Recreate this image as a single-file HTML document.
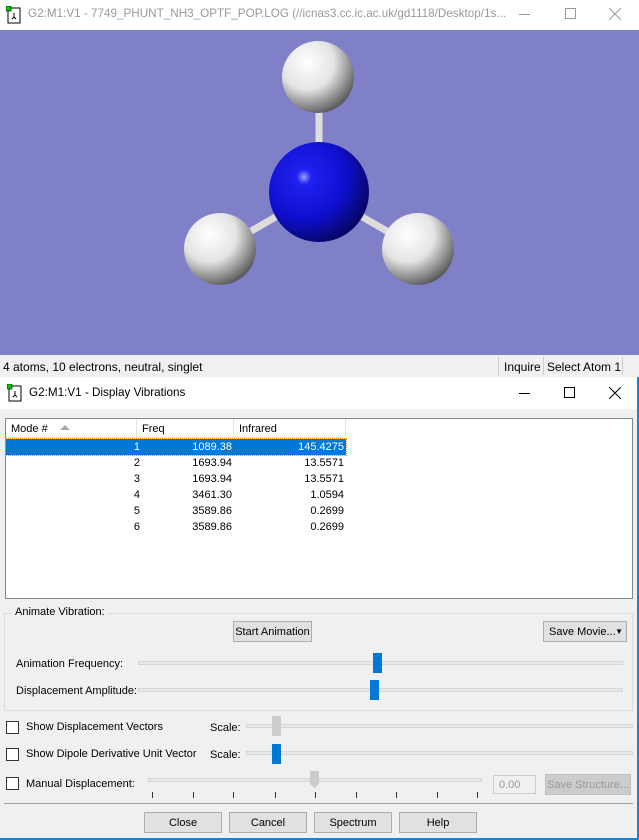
<!DOCTYPE html>
<html><head><style>
*{margin:0;padding:0;box-sizing:border-box}
body{width:639px;height:840px;overflow:hidden;background:#f0f0f0;font-family:"Liberation Sans",Arial,sans-serif;font-size:11px;color:#000;position:relative}
.a{position:absolute}
.t{white-space:nowrap}
.btn{position:absolute;background:#e1e1e1;border:1px solid #adadad;text-align:center;line-height:20px;font-size:11px;white-space:nowrap;overflow:hidden}
.track{position:absolute;height:4px;background:#e7e7e7;border:1px solid #d6d6d6}
.thumb{position:absolute;width:9px;height:20px;background:#0078d7}
.cb{position:absolute;width:13px;height:13px;border:1px solid #333;background:#fff}
.row{position:absolute;left:6px;width:340px;height:16px;line-height:16px}
.row span{position:absolute;text-align:right}
</style></head><body>
<div class="a" style="left:0;top:0;width:639px;height:30px;background:#fff"></div>
<svg class="a" style="left:6px;top:6px" width="16" height="18"><rect x="2" y="2" width="12" height="15" fill="#fff" stroke="#000"/><rect x="0" y="0" width="5" height="5" fill="#0c0" stroke="#000" stroke-width=".6"/><path d="M8 7v4M6 13l2-2 2 2" stroke="#000" fill="none"/></svg>
<div class="a t" style="left:28px;top:7px;color:#999;font-size:11.7px">G2:M1:V1 - 7749_PHUNT_NH3_OPTF_POP.LOG (//icnas3.cc.ic.ac.uk/gd1118/Desktop/1s...</div>
<div class="a" style="left:519px;top:14px;width:11px;height:1px;background:#999"></div>
<div class="a" style="left:565px;top:8px;width:11px;height:11px;border:1px solid #999"></div>
<svg class="a" style="left:609px;top:8px" width="12" height="12"><path d="M0 0L12 12M12 0L0 12" stroke="#999"/></svg>
<div class="a" style="left:0;top:30px;width:639px;height:325px;background:#8080c8"></div>
<svg class="a" style="left:0;top:30px" width="639" height="325">
<defs>
<radialGradient id="h" cx="0.35" cy="0.3" r="0.75"><stop offset="0" stop-color="#fff"/><stop offset="0.5" stop-color="#e4e4e4"/><stop offset="1" stop-color="#555"/></radialGradient>
<radialGradient id="n" cx="0.35" cy="0.35" r="0.75"><stop offset="0" stop-color="#9aa0ff"/><stop offset="0.1" stop-color="#2020f0"/><stop offset="0.55" stop-color="#0f0fd0"/><stop offset="1" stop-color="#050550"/></radialGradient>
</defs>
<line x1="319" y1="80" x2="319" y2="160" stroke="#ddd" stroke-width="7"/>
<line x1="319" y1="162" x2="220" y2="219" stroke="#ddd" stroke-width="7"/>
<line x1="319" y1="162" x2="418" y2="219" stroke="#ddd" stroke-width="7"/>
<circle cx="318" cy="47" r="36" fill="url(#h)"/>
<circle cx="220" cy="219" r="36" fill="url(#h)"/>
<circle cx="418" cy="219" r="36" fill="url(#h)"/>
<circle cx="319" cy="162" r="50" fill="url(#n)"/>
</svg>
<div class="a t" style="left:3px;top:360px;font-size:12px">4 atoms, 10 electrons, neutral, singlet</div>
<div class="a" style="left:498px;top:357px;width:1px;height:18px;background:#ccc"></div>
<div class="a t" style="left:504px;top:360px;font-size:12px">Inquire</div>
<div class="a" style="left:543px;top:357px;width:1px;height:18px;background:#ccc"></div>
<div class="a t" style="left:547px;top:360px;font-size:12px">Select Atom 1</div>
<div class="a" style="left:622px;top:357px;width:1px;height:18px;background:#ccc"></div>
<div class="a" style="left:0;top:377px;width:639px;height:32px;background:#fff"></div>
<svg class="a" style="left:7px;top:384px" width="16" height="18"><rect x="2" y="2" width="12" height="15" fill="#fff" stroke="#000"/><rect x="0" y="0" width="5" height="5" fill="#0c0" stroke="#000" stroke-width=".6"/><path d="M8 7v4M6 13l2-2 2 2" stroke="#000" fill="none"/></svg>
<div class="a t" style="left:29px;top:386px;font-size:11.7px">G2:M1:V1 - Display Vibrations</div>
<div class="a" style="left:519px;top:393px;width:11px;height:1px;background:#000"></div>
<div class="a" style="left:564px;top:387px;width:11px;height:11px;border:1px solid #000"></div>
<svg class="a" style="left:609px;top:387px" width="12" height="12"><path d="M0 0L12 12M12 0L0 12" stroke="#000"/></svg>
<div class="a" style="left:637px;top:377px;width:2px;height:463px;background:#1883d7"></div>
<div class="a" style="left:0;top:838px;width:639px;height:2px;background:#1883d7"></div>
<div class="a" style="left:5px;top:418px;width:628px;height:181px;background:#fff;border:1px solid #828790"></div>
<div class="a" style="left:6px;top:419px;width:340px;height:19px;background:#fff;border-bottom:1px solid #e5e5e5"></div>
<div class="a" style="left:136px;top:419px;width:1px;height:19px;background:#e5e5e5"></div>
<div class="a" style="left:233px;top:419px;width:1px;height:19px;background:#e5e5e5"></div>
<div class="a" style="left:345px;top:419px;width:1px;height:19px;background:#e5e5e5"></div>
<div class="a t" style="left:11px;top:423px">Mode #</div>
<svg class="a" style="left:60px;top:425px" width="10" height="6"><path d="M0 5L5 0L10 5Z" fill="#aaa"/></svg>
<div class="a t" style="left:142px;top:423px">Freq</div>
<div class="a t" style="left:239px;top:423px">Infrared</div>
<div class="a" style="left:6px;top:439px;width:340px;height:16px;background:#0078d7;outline:1px dotted #f90"></div>
<div class="row" style="top:439px;color:#fff"><span style="right:206px">1</span><span style="right:114px">1089.38</span><span style="right:2px">145.4275</span></div>
<div class="row" style="top:455px"><span style="right:206px">2</span><span style="right:114px">1693.94</span><span style="right:2px">13.5571</span></div>
<div class="row" style="top:471px"><span style="right:206px">3</span><span style="right:114px">1693.94</span><span style="right:2px">13.5571</span></div>
<div class="row" style="top:487px"><span style="right:206px">4</span><span style="right:114px">3461.30</span><span style="right:2px">1.0594</span></div>
<div class="row" style="top:503px"><span style="right:206px">5</span><span style="right:114px">3589.86</span><span style="right:2px">0.2699</span></div>
<div class="row" style="top:519px"><span style="right:206px">6</span><span style="right:114px">3589.86</span><span style="right:2px">0.2699</span></div>
<div class="a" style="left:4px;top:613px;width:629px;height:98px;border:1px solid #dcdcdc"></div>
<div class="a t" style="left:12px;top:606px;background:#f0f0f0;padding:0 3px">Animate Vibration:</div>
<div class="btn" style="left:233px;top:621px;width:79px;height:21px">Start Animation</div>
<div class="btn" style="left:543px;top:621px;width:84px;height:21px;text-align:left;padding-left:5px">Save Movie...<span style="position:absolute;right:3px;top:0;font-size:8px">▼</span></div>
<div class="a t" style="left:16px;top:658px">Animation Frequency:</div>
<div class="track" style="left:138px;top:661px;width:485px"></div>
<div class="thumb" style="left:373px;top:653px"></div>
<div class="a t" style="left:16px;top:685px">Displacement Amplitude:</div>
<div class="track" style="left:138px;top:688px;width:485px"></div>
<div class="thumb" style="left:370px;top:680px"></div>
<div class="cb" style="left:6px;top:721px"></div>
<div class="a t" style="left:26px;top:721px">Show Displacement Vectors</div>
<div class="a t" style="left:210px;top:722px">Scale:</div>
<div class="track" style="left:246px;top:724px;width:387px"></div>
<div class="thumb" style="left:272px;top:716px;background:#ccc"></div>
<div class="cb" style="left:6px;top:748px"></div>
<div class="a t" style="left:26px;top:748px">Show Dipole Derivative Unit Vector</div>
<div class="a t" style="left:210px;top:749px">Scale:</div>
<div class="track" style="left:246px;top:751px;width:387px"></div>
<div class="thumb" style="left:272px;top:744px"></div>
<div class="cb" style="left:6px;top:777px"></div>
<div class="a t" style="left:26px;top:778px">Manual Displacement:</div>
<div class="track" style="left:148px;top:778px;width:334px"></div>
<svg class="a" style="left:310px;top:771px" width="10" height="18"><path d="M0 0H9V13L4.5 17L0 13Z" fill="#ccc"/></svg>
<svg class="a" style="left:140px;top:790px" width="350" height="12"><g stroke="#333"><path d="M12.5 2v6M53.5 2v6M93.5 2v6M135.5 2v6M175.5 2v6M216.5 2v6M256.5 2v6M297.5 2v6M337.5 2v6"/></g></svg>
<div class="a" style="left:493px;top:775px;width:43px;height:19px;border:1px solid #ccc;background:#f0f0f0;color:#999;padding:3px 5px">0.00</div>
<div class="btn" style="left:545px;top:774px;width:86px;height:21px;background:#ccc;border-color:#bfbfbf;color:#999">Save Structure...</div>
<div class="a" style="left:4px;top:803px;width:629px;height:1px;background:#a0a0a0"></div>
<div class="btn" style="left:144px;top:812px;width:78px;height:21px">Close</div>
<div class="btn" style="left:229px;top:812px;width:78px;height:21px">Cancel</div>
<div class="btn" style="left:314px;top:812px;width:78px;height:21px">Spectrum</div>
<div class="btn" style="left:399px;top:812px;width:78px;height:21px">Help</div>
</body></html>
